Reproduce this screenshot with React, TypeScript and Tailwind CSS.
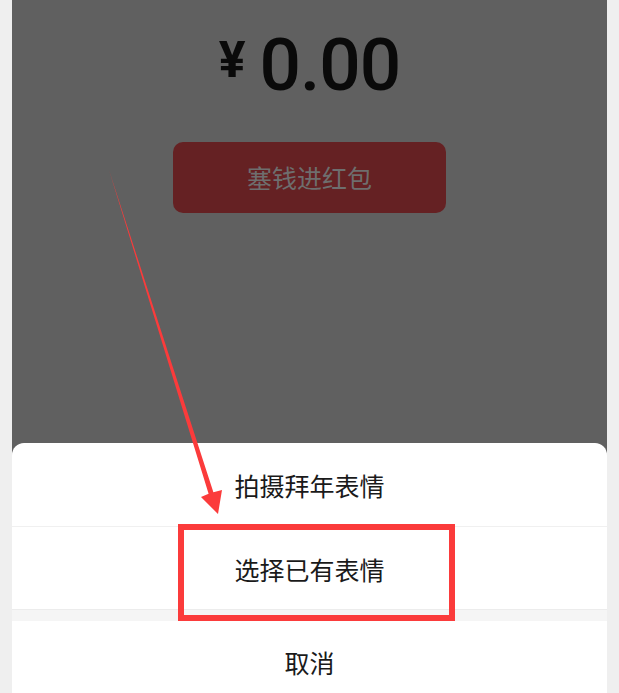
import React from 'react';

const cjk = { fontFamily: '"Noto Sans CJK SC", "Noto Sans", sans-serif' };

export default function App() {
  return (
    <div className="relative w-[619px] h-[693px] overflow-hidden bg-[#efefef] px-[12px]">
      <div className="h-full bg-[#606060] flex flex-col items-center">
        {/* amount */}
        <div className="shrink-0 mt-[29px] flex items-start text-[#0a0a0a]" style={{ fontFamily: 'Roboto, "Liberation Sans", sans-serif' }}>
          <span className="mt-[6px] text-[50px] leading-none font-bold">¥</span>
          <span className="ml-[14px] text-[73px] leading-none font-medium tracking-[-1px]">0.00</span>
        </div>

        <button
          className="shrink-0 mt-[40px] w-[273px] h-[71px] rounded-[10px] bg-[#652123] text-[25px] text-[#6e6e6e]"
          style={cjk}
        >
          塞钱进红包
        </button>

        {/* action sheet */}
        <div className="shrink-0 mt-[230px] w-full rounded-t-[12px] bg-white text-[25px] text-[#1a1a1a]" style={cjk}>
          <div className="h-[84px] pt-[3px] flex items-center justify-center border-b border-[#f0f0f0]">拍摄拜年表情</div>
          <div className="h-[82px] pt-[3px] flex items-center justify-center">选择已有表情</div>
          <div className="h-[12px] bg-[#f5f5f5] border-t border-[#ececec]" />
          <div className="h-[84px] flex items-center justify-center">取消</div>
        </div>
      </div>

      {/* annotations */}
      <div className="absolute left-[178px] top-[524px] w-[277px] h-[97px] border-[6px] border-[#fb3b3b]" />
      <svg className="absolute left-0 top-0 pointer-events-none" width="619" height="693">
        <polygon
          points="109,170 213.4,492.2 222,490 218,514 201,497 208.6,493.8"
          fill="#fb3b3b"
        />
      </svg>
    </div>
  );
}
